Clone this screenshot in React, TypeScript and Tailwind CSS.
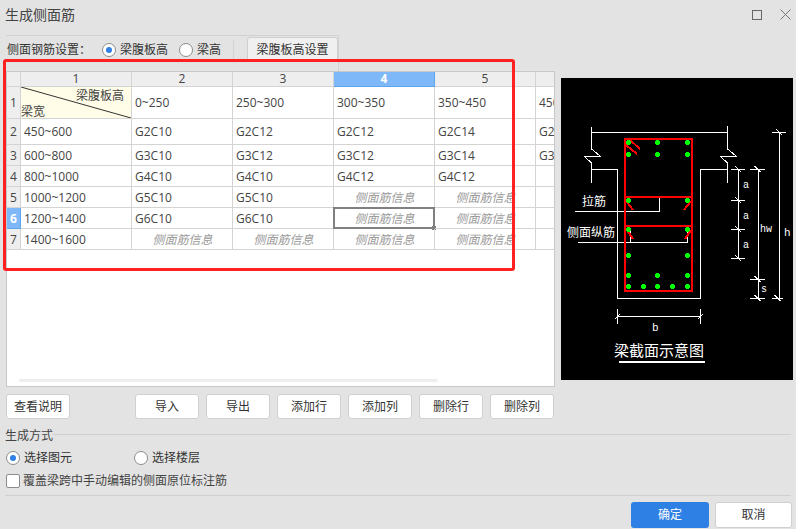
const font = { fontFamily: '"Open Sans", "Noto Sans CJK SC", sans-serif' };
const cadFont = { fontFamily: '"Liberation Mono", "Noto Sans CJK SC", monospace' };

const columns = ["1", "2", "3", "4", "5", ""];
const hint = "侧面筋信息";

const rows = [
  { h: "h-[26px]", cells: ["450~600", "G2C10", "G2C12", "G2C12", "G2C14", "G2"] },
  { h: "h-[21px]", cells: ["600~800", "G3C10", "G3C12", "G3C12", "G3C14", "G3"] },
  { h: "h-[21px]", cells: ["800~1000", "G4C10", "G4C10", "G4C12", "G4C12", ""] },
  { h: "h-[21px]", cells: ["1000~1200", "G5C10", "G5C10", hint, hint, ""] },
  { h: "h-[21px]", cells: ["1200~1400", "G6C10", "G6C10", hint, hint, ""] },
  { h: "h-[21px]", cells: ["1400~1600", hint, hint, hint, hint, ""] },
];

const colWidth = ["w-[111px]", "w-[101px]", "w-[101px]", "w-[101px]", "w-[101px]", "w-[101px]"];

function Cell({ text, col, selected, low }: { text: string; col: number; selected?: boolean; low?: boolean }) {
  const isHint = text === hint;
  return (
    <div
      className={`relative shrink-0 h-full flex items-center border-r border-b border-[#d4d4d4] text-[12px] ${colWidth[col]} ${
        isHint ? "justify-center pl-[1px] italic text-[#9a9a9a]" : "pl-[3px] text-[#444]"
      } ${low ? "pt-[2px]" : ""}`}
    >
      {text}
      {selected && (
        <div className="absolute -left-px -top-px w-[102px] h-[22px] border-2 border-[#808080]">
          <div className="absolute -right-[3px] -bottom-[3px] w-[4px] h-[4px] bg-[#808080]" />
        </div>
      )}
    </div>
  );
}

function Grid() {
  return (
    <div className="h-[316px] border border-[#c8c8c8] bg-white overflow-hidden relative">
      <div className="flex h-[15px]">
        <div className="shrink-0 w-[14px] bg-[#eeeeee] border-r border-b border-[#d4d4d4]" />
        {columns.map((c, i) => (
          <div
            key={i}
            className={`shrink-0 flex items-center justify-center text-[12px] border-r border-b ${colWidth[i]} ${
              i === 3
                ? "bg-[#7eb8f8] border-[#5fa4ee] text-white font-bold"
                : "bg-[#eeeeee] border-[#d4d4d4] text-[#444]"
            }`}
          >
            {c}
          </div>
        ))}
      </div>
      <div className="flex h-[32px]">
        <div className="shrink-0 w-[14px] flex items-center justify-center bg-[#eeeeee] border-r border-b border-[#d4d4d4] text-[12px] text-[#444]">
          1
        </div>
        <div className="shrink-0 w-[111px] relative bg-[#fffde8] border-r border-b border-[#d4d4d4] text-[12px] text-[#444]">
          <svg className="absolute inset-0" width="110" height="31">
            <line x1="0" y1="0" x2="110" y2="31" stroke="#333" strokeWidth="1" />
          </svg>
          <div className="absolute right-[7px] top-0 leading-[18px]">梁腹板高</div>
          <div className="absolute left-0 -bottom-[3px] leading-[18px]">梁宽</div>
        </div>
        {["0~250", "250~300", "300~350", "350~450", "450"].map((t) => (
          <div
            key={t}
            className="shrink-0 w-[101px] flex items-center pl-[3px] text-[12px] text-[#444] border-r border-b border-[#d4d4d4]"
          >
            {t}
          </div>
        ))}
      </div>
      {rows.map((r, ri) => (
        <div key={ri} className={`flex ${r.h}`}>
          <div
            className={`shrink-0 w-[14px] flex items-center justify-center text-[12px] border-r border-b ${
              ri === 4
                ? "bg-[#7eb8f8] border-[#5fa4ee] text-white font-bold"
                : "bg-[#eeeeee] border-[#d4d4d4] text-[#444]"
            } ${ri > 0 ? "pt-[2px]" : ""}`}
          >
            {ri + 2}
          </div>
          {r.cells.map((t, ci) => (
            <Cell key={ci} text={t} col={ci} low={ri > 0} selected={ri === 4 && ci === 3} />
          ))}
        </div>
      ))}
      <div className="absolute left-[12px] bottom-[4px] w-[419px] h-[3px] rounded-full bg-[#eeeeee]" />
    </div>
  );
}

function Dot({ x, y }: { x: number; y: number }) {
  return (
    <g fill="#00ff00">
      <rect x={x - 2} y={y - 1} width="5" height="3" />
      <rect x={x - 1} y={y - 2} width="3" height="5" />
    </g>
  );
}

const dots = [
  [628, 142], [657, 142], [687, 142],
  [628, 154], [657, 154], [687, 154],
  [628, 200], [687, 200],
  [628, 229], [687, 229],
  [628, 255], [687, 255],
  [628, 275], [657, 275], [687, 275],
  [628, 286], [643, 286], [657, 286], [672, 286], [687, 286],
];

const ticks = [
  [731, 745, 169], [731, 745, 200], [731, 745, 229], [731, 745, 258],
  [750, 765, 169], [750, 765, 279], [750, 765, 298],
  [772, 786, 132], [772, 783, 298],
];

function Section() {
  return (
    <svg className="shrink-0 block" width="232" height="302" viewBox="561 78 232 302" shapeRendering="crispEdges">
      <rect x="561" y="78" width="232" height="302" fill="#000" />
      <g stroke="#fff" strokeWidth="1" fill="none">
        <path d="M591.5 127V149L600 156H584L591.5 163V183" />
        <path d="M727.5 126V149L736 156H720L727.5 163V183" />
        <path d="M591.5 132.5H727.5" />
        <path d="M591.5 169.5H617.5V298.5H700.5V169.5H727.5" />
        <path d="M575 211.5H659.5V197" />
        <path d="M578 242.5H687.5V229" />
        <path d="M630.5 230V242" />
        <path d="M738.5 169V258" />
        <path d="M758.5 169V298" />
        <path d="M779.5 132V298" />
        <path d="M617.5 316.5H700.5" />
        <path d="M617.5 309V324" />
        <path d="M700.5 309V324" />
        <path d="M615 319L620 314" />
        <path d="M698 319L703 314" />
        {ticks.map(([a, b, y], i) => (
          <g key={i}>
            <path d={`M${a} ${y + 0.5}H${b}`} />
            <path d={`M${(a + b) / 2 - 3} ${y - 3}L${(a + b) / 2 + 3} ${y + 3}`} />
          </g>
        ))}
      </g>
      <g stroke="#ff0000" strokeWidth="2" fill="none">
        <rect x="625" y="139" width="67" height="152" />
        <path d="M625 197H692" />
        <path d="M625 226H692" />
        <path d="M630 140L640 149" />
        <path d="M626 145L637 154" />
        <path d="M627 202L633 210" />
        <path d="M691 201L684 210" />
        <path d="M627 230L633 239" />
        <path d="M691 230L685 239" />
      </g>
      {dots.map(([x, y], i) => (
        <Dot key={i} x={x} y={y} />
      ))}
      <g fill="#fff" style={cadFont}>
        <text x="582" y="206" fontSize="12">拉筋</text>
        <text x="567" y="237" fontSize="12">侧面纵筋</text>
        <text x="614" y="356" fontSize="15">梁截面示意图</text>
        <text x="743" y="188" fontSize="10">a</text>
        <text x="743" y="219" fontSize="10">a</text>
        <text x="743" y="248" fontSize="10">a</text>
        <text x="760" y="232" fontSize="10">hw</text>
        <text x="784" y="236" fontSize="11">h</text>
        <text x="761" y="292" fontSize="10">s</text>
        <text x="652" y="331" fontSize="11">b</text>
      </g>
      <rect x="619" y="361" width="86" height="2" fill="#fff" />
    </svg>
  );
}

function Radio({ on, label, className }: { on?: boolean; label: string; className?: string }) {
  return (
    <div className={`flex items-center gap-[4px] text-[12px] text-[#333] ${className ?? ""}`}>
      <div className="w-[14px] h-[14px] rounded-full border border-[#8c8c8c] bg-white flex items-center justify-center">
        {on && <div className="w-[6px] h-[6px] rounded-full bg-[#2f80e4]" />}
      </div>
      {label}
    </div>
  );
}

function Btn({ label, className }: { label: string; className?: string }) {
  return (
    <button className={`h-[25px] rounded-[3px] border border-[#d0d0d0] bg-white text-[12px] text-[#333] ${className ?? ""}`}>
      {label}
    </button>
  );
}

export default function App() {
  return (
    <div className="relative w-[796px] h-[529px] bg-[#e3e3e3] overflow-hidden" style={font}>
      <div className="flex items-center justify-between h-[29px] pl-[5px] pr-[5px]">
        <div className="text-[14px] text-[#444]">生成侧面筋</div>
        <div className="flex items-center gap-[18px]">
          <svg width="10" height="10" viewBox="0 0 10 10">
            <rect x="0.5" y="0.5" width="9" height="9" fill="none" stroke="#666" />
          </svg>
          <svg width="11" height="11" viewBox="0 0 11 11">
            <path d="M0.5 0.5L10.5 10.5M10.5 0.5L0.5 10.5" stroke="#777" fill="none" />
          </svg>
        </div>
      </div>

      <div className="ml-[6px] mt-[6px] w-[333px] h-[36px] border-t border-r border-[#d2d2d2] flex items-start pt-[4px] text-[12px] text-[#333]">
        <span className="w-[96px] h-[20px] shrink-0 pl-px leading-[20px]">侧面钢筋设置：</span>
        <Radio on label="梁腹板高" className="w-[77px] h-[20px] shrink-0" />
        <Radio label="梁高" className="w-[54px] h-[20px] shrink-0" />
        <div className="w-px h-[20px] bg-[#d2d2d2]" />
        <button className="ml-[13px] -mt-[3px] w-[91px] h-[25px] shrink-0 rounded-[3px] border border-[#cfcfcf] bg-[#f0f0f0] text-[12px] text-[#333]">
          梁腹板高设置
        </button>
      </div>

      <div className="flex items-start pl-[6px]">
        <div className="w-[549px] shrink-0">
          <Grid />
          <div className="flex mt-[7px]">
            <Btn label="查看说明" className="w-[64px]" />
            <div className="flex gap-[7px] ml-[65px]">
              <Btn label="导入" className="w-[64px]" />
              <Btn label="导出" className="w-[64px]" />
              <Btn label="添加行" className="w-[64px]" />
              <Btn label="添加列" className="w-[64px]" />
              <Btn label="删除行" className="w-[64px]" />
              <Btn label="删除列" className="w-[64px]" />
            </div>
          </div>
        </div>
        <div className="ml-[6px] mt-[7px]">
          <Section />
        </div>
      </div>

      <div className="mx-[5px] mt-[7px] flex items-center h-[17px] text-[12px] text-[#444]">
        <span className="mt-[3px]">生成方式</span>
        <div className="flex-1 h-px bg-[#cfcfcf] -mt-[1px]" />
      </div>
      <div className="flex ml-[6px] mt-[5px] h-[20px]">
        <Radio on label="选择图元" className="w-[128px]" />
        <Radio label="选择楼层" />
      </div>
      <div className="flex items-center gap-[3px] ml-[6px] mt-[3px] h-[20px] text-[12px] text-[#444]">
        <div className="w-[14px] h-[14px] rounded-[2px] border border-[#8c8c8c] bg-white" />
        覆盖梁跨中手动编辑的侧面原位标注筋
      </div>
      <div className="mx-[5px] mt-[4px] h-px bg-[#cfcfcf]" />
      <div className="flex justify-end gap-[6px] mt-[6px] pr-[4px]">
        <button className="w-[78px] h-[26px] rounded-[3px] bg-[#2f80e4] text-white text-[12px]">确定</button>
        <Btn label="取消" className="w-[77px] h-[26px]" />
      </div>

      {/* annotation drawn over the dialog */}
      <div className="absolute left-[3px] top-[59px] w-[512px] h-[212px] border-[3px] border-[#ff2020] rounded-[3px] pointer-events-none" />
    </div>
  );
}
